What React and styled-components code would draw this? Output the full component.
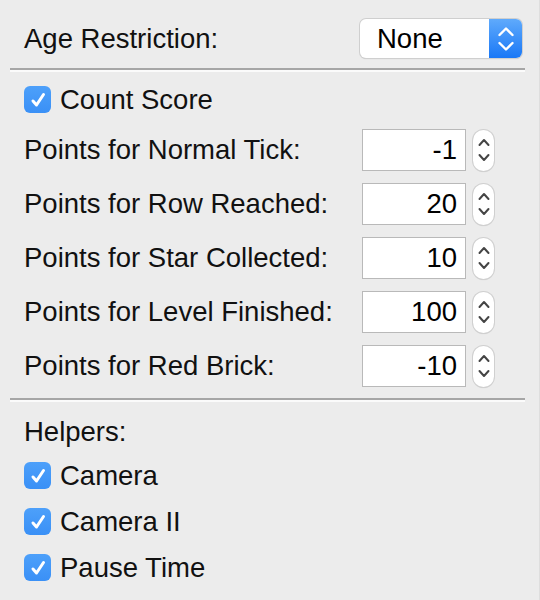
import React, { useState } from 'react';
import styled, { createGlobalStyle } from 'styled-components';

const GlobalStyle = createGlobalStyle`
  html, body {
    margin: 0;
    padding: 0;
    background: #ececec;
  }
  body {
    font-family: "Liberation Sans", Arial, Helvetica, sans-serif;
  }
`;

const Panel = styled.div`
  width: 540px;
  height: 600px;
  box-sizing: border-box;
  background: #ececec;
  border-right: 1px solid #dedede;
  display: flex;
  flex-direction: column;
  color: #111;
  font-size: 27.5px;
  overflow: hidden;
`;

const Section = styled.div`
  display: flex;
  flex-direction: column;
  padding: ${(p) => p.$pad || '0'};
  padding-left: 24px;
  padding-right: 19px;
`;

const Row = styled.div`
  display: flex;
  align-items: center;
  justify-content: space-between;
  height: ${(p) => p.$h || 41}px;
  margin-top: ${(p) => p.$mt || 0}px;
`;

const Label = styled.span`
  line-height: 30px;
  white-space: nowrap;
`;

const Divider = styled.div`
  margin: 0 14px 0 10px;
  height: 2px;
  background: #a6a6a6;
  border-bottom: 2px solid #fbfbfb;
`;

const Popup = styled.div`
  width: 162px;
  height: 39px;
  box-sizing: border-box;
  display: flex;
  border-radius: 6px;
  background: #fff;
  box-shadow: 0 0 0 1px #cfcfcf, 0 1px 1px rgba(0, 0, 0, 0.18);
  overflow: hidden;
  margin-right: -2px;
`;

const PopupText = styled.span`
  flex: 1;
  padding-left: 17px;
  line-height: 39px;
  color: #000;
`;

const PopupArrows = styled.div`
  width: 33px;
  background: linear-gradient(#5faafc, #1a78f6);
  display: flex;
  align-items: center;
  justify-content: center;
`;

const Field = styled.div`
  display: flex;
  align-items: center;
  gap: 7px;
  margin-right: 26px;
`;

const NumberBox = styled.div`
  width: 104px;
  height: 42px;
  box-sizing: border-box;
  background: #fff;
  border: 1.5px solid #b9b9b9;
  text-align: right;
  padding-right: 8px;
  line-height: 40px;
  color: #000;
`;

const Stepper = styled.div`
  width: 21px;
  height: 41px;
  box-sizing: border-box;
  border-radius: 11px;
  background: #fff;
  box-shadow: 0 0 0 1px #d0d0d0, 0 1px 1px rgba(0, 0, 0, 0.15);
  display: flex;
  align-items: center;
  justify-content: center;
`;

const CheckRow = styled.label`
  display: flex;
  align-items: center;
  gap: 9px;
  height: 27px;
  margin-top: ${(p) => p.$mt || 0}px;
  cursor: default;
`;

const Box = styled.span`
  width: 27px;
  height: 27px;
  border-radius: 6px;
  background: ${(p) => (p.$on ? 'linear-gradient(#4da0fa, #3a90f6)' : '#fff')};
  box-shadow: ${(p) => (p.$on ? 'none' : '0 0 0 1px #bbb')};
  display: flex;
  align-items: center;
  justify-content: center;
  flex-shrink: 0;
`;

const Check = ({ label, mt }) => {
  const [on, setOn] = useState(true);
  return (
    <CheckRow $mt={mt} onClick={() => setOn(!on)}>
      <Box $on={on}>
        {on && (
          <svg width="18" height="18" viewBox="0 0 18 18">
            <path d="M4 10 L7.5 14 L14.5 3.5" fill="none" stroke="#fff" strokeWidth="3" strokeLinecap="round" strokeLinejoin="round" />
          </svg>
        )}
      </Box>
      <Label>{label}</Label>
    </CheckRow>
  );
};

// up + down chevrons, sized in px directly
const UpDown = ({ color, w, h, cw, ch, gap, sw }) => {
  const x0 = (w - cw) / 2;
  const x1 = x0 + cw;
  const xm = w / 2;
  const mid = h / 2;
  const upB = mid - gap / 2;
  const upT = upB - ch;
  const dnT = mid + gap / 2;
  const dnB = dnT + ch;
  return (
    <svg width={w} height={h} viewBox={`0 0 ${w} ${h}`}>
      <path d={`M${x0} ${upB} L${xm} ${upT} L${x1} ${upB}`} fill="none" stroke={color} strokeWidth={sw} strokeLinecap="round" strokeLinejoin="round" />
      <path d={`M${x0} ${dnT} L${xm} ${dnB} L${x1} ${dnT}`} fill="none" stroke={color} strokeWidth={sw} strokeLinecap="round" strokeLinejoin="round" />
    </svg>
  );
};

const points = [
  ['Points for Normal Tick:', '-1'],
  ['Points for Row Reached:', '20'],
  ['Points for Star Collected:', '10'],
  ['Points for Level Finished:', '100'],
  ['Points for Red Brick:', '-10'],
];

const App = () => (
  <Panel>
    <GlobalStyle />
    <Section $pad="19px 0 10px">
      <Row $h={39}>
        <Label>Age Restriction:</Label>
        <Popup>
          <PopupText>None</PopupText>
          <PopupArrows>
            <UpDown color="#fff" w={18} h={30} cw={13} ch={6.5} gap={8} sw={2.4} />
          </PopupArrows>
        </Popup>
      </Row>
    </Section>
    <Divider />
    <Section $pad="14px 0 11px">
      <Check label="Count Score" />
      {points.map(([name, value], i) => (
        <Row key={name} $h={42} $mt={i === 0 ? 16 : 12}>
          <Label>{name}</Label>
          <Field>
            <NumberBox>{value}</NumberBox>
            <Stepper>
              <UpDown color="#454545" w={14} h={30} cw={9} ch={5} gap={10} sw={2} />
            </Stepper>
          </Field>
        </Row>
      ))}
    </Section>
    <Divider />
    <Section $pad="15px 0 0">
      <Label>Helpers:</Label>
      <Check label="Camera" mt={15} />
      <Check label="Camera II" mt={19} />
      <Check label="Pause Time" mt={19} />
    </Section>
  </Panel>
);

export default App;
